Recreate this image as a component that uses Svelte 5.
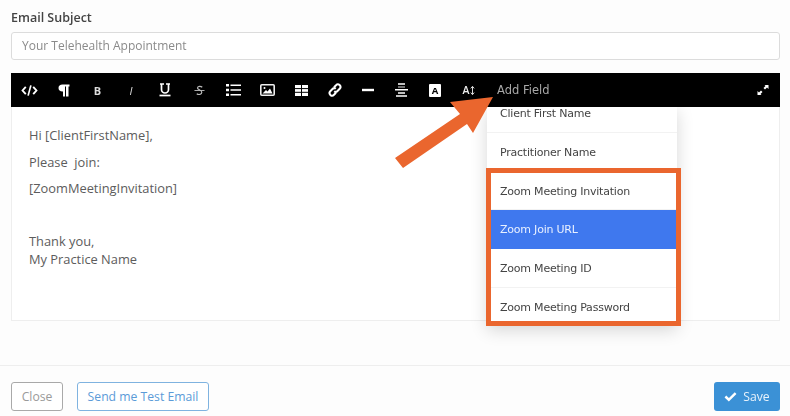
<script>
	const items = ['Zoom Meeting Invitation', 'Zoom Join URL', 'Zoom Meeting ID', 'Zoom Meeting Password'];
</script>

<main>
	<section class="form">
		<p class="label">Email Subject</p>
		<div class="input">Your Telehealth Appointment</div>

		<div class="editor">
			<div class="toolbar">
				<span class="tool" style="--w: 36px">
					<svg viewBox="0 0 18 14" width="17" height="13"><path d="M5 3 1.500 7 5 11M13 3l3.500 4L13 11" fill="none" stroke="#fff" stroke-width="2"/><path d="M10.500 1.500 7.500 12.500" stroke="#fff" stroke-width="1.800"/></svg>
				</span>
				<span class="tool" style="--w: 34px">
					<svg viewBox="0 0 12 13" width="12" height="13"><path d="M4.500 0.500H11.500V2.500H10.500V12.500H8V2.500H7V12.500H5V7.500H4.500C2 7.500 .5 6 .5 4S2 .5 4.500 .5Z" fill="#fff"/></svg>
				</span>
				<span class="tool glyph" style="--w: 33px">B</span>
				<span class="tool glyph ital" style="--w: 34px">I</span>
				<span class="tool" style="--w: 34px">
					<svg viewBox="0 0 12 14" width="12" height="14"><path d="M1 1h4M7 1h4M2.500 1v5.500a3.500 3.500 0 0 0 7 0V1" fill="none" stroke="#fff" stroke-width="1.700"/><path d="M0.500 12.500h11" stroke="#fff" stroke-width="1.700"/></svg>
				</span>
				<span class="tool" style="--w: 34px">
					<svg viewBox="0 0 12 12" width="11" height="11"><path d="M9 2.500C7.500 1 4 1 3.800 3.200 3.700 5.500 8.500 5 8.500 8 8.500 10.500 5 11 3 9.500" fill="none" stroke="#bbb" stroke-width="1.300"/><path d="M0.500 6h11" stroke="#bbb" stroke-width="1"/></svg>
				</span>
				<span class="tool" style="--w: 34px">
					<svg viewBox="0 0 15 12" width="15" height="12"><path d="M0 0h3v2.400H0zM0 4.800h3v2.400H0zM0 9.600h3V12H0z" fill="#fff"/><path d="M4.500 .5H15v1.600H4.500zM4.500 5.200H15v1.600H4.500zM4.500 9.900H15v1.600H4.500z" fill="#fff"/></svg>
				</span>
				<span class="tool" style="--w: 34px">
					<svg viewBox="0 0 15 12" width="15" height="12"><rect x=".8" y=".8" width="13.400" height="10.400" rx="1" fill="none" stroke="#eee" stroke-width="1.600"/><path d="M2.500 9.500 6 6l1.500 1.500L10 4.500l2.500 5z" fill="#fff"/><circle cx="4.500" cy="4" r="1" fill="#fff"/></svg>
				</span>
				<span class="tool" style="--w: 34px">
					<svg viewBox="0 0 13 11" width="13" height="11"><path d="M0 0h13v11H0z" fill="#fff"/><path d="M0 3.600h13M0 7.300h13M6.500 0V11" stroke="#000" stroke-width="1"/></svg>
				</span>
				<span class="tool" style="--w: 33px">
					<svg viewBox="0 0 14 14" width="14" height="14"><path d="M6 4.200 8 2.200a2.400 2.400 0 0 1 3.700 3.500L9.500 8a2.400 2.400 0 0 1-3.300.2M8 9.800 6 11.800a2.400 2.400 0 0 1-3.700-3.500L4.500 6a2.400 2.400 0 0 1 3.300-.2" fill="none" stroke="#fff" stroke-width="2"/></svg>
				</span>
				<span class="tool" style="--w: 33px">
					<svg viewBox="0 0 12 4" width="12" height="4"><path d="M0 .8h12v2.400H0z" fill="#fff"/></svg>
				</span>
				<span class="tool" style="--w: 34px">
					<svg viewBox="0 0 13 14" width="13" height="14"><path d="M3 1h7M0 6.800h13M3 10h7M1 13h11" stroke="#fff" stroke-width="1.500"/><path d="M3 4h7" stroke="#bbb" stroke-width="1.200"/></svg>
				</span>
				<span class="tool" style="--w: 34px">
					<span class="badge">A</span>
				</span>
				<span class="tool" style="--w: 34px">
					<span class="size">A</span>
					<svg viewBox="0 0 6 12" width="5" height="11"><path d="M3 1.500v9M1 3.500 3 1l2 2.500M1 8.500 3 11l2-2.500" fill="none" stroke="#eee" stroke-width="1.100"/></svg>
				</span>
				<span class="add">Add Field</span>
				<span class="expand">
					<svg viewBox="0 0 12 12" width="12" height="12"><path d="M7.500 1H11.500V5L10 3.500 8 5.500 6.500 4 8.500 2Z" fill="#fff"/><path d="M4.500 11H.5V7L2 8.500 4 6.500 5.500 8 3.500 10Z" fill="#fff"/></svg>
				</span>
			</div>

			<div class="body">
				<p>Hi [ClientFirstName],</p>
				<p>Please&nbsp; join:</p>
				<p>[ZoomMeetingInvitation]</p>
				<p class="sign">Thank you,<br />My Practice Name</p>

				<div class="menu">
					<div class="row first">Client First Name</div>
					<div class="row">Practitioner Name</div>
					{#each items as item, i}
						<div class="row" class:active={i == 1}>{item}</div>
					{/each}
					<div class="callout"></div>
				</div>
			</div>
		</div>
	</section>

	<footer>
		<button class="close">Close</button>
		<button class="test">Send me Test Email</button>
		<button class="save">
			<svg viewBox="0 0 14 11" width="13" height="11"><path d="M1.500 5.500 5.200 9 12.500 1.800" fill="none" stroke="#fff" stroke-width="2.600"/></svg>
			Save
		</button>
	</footer>

	<svg class="arrow" viewBox="390 92 110 80" width="110" height="80">
		<path d="M493 97 473 133 467 124 403 168 395 158 460 114 450 102Z" fill="#ea662e"/>
	</svg>
</main>

<style>
	:global(body) {
		background: #fdfdfd;
	}
	main {
		position: relative;
		width: 790px;
		height: 416px;
		overflow: hidden;
		font-family: "Open Sans", sans-serif;
		filter: blur(0.35px);
	}
	.form {
		padding: 10px 10px 0 11px;
		height: 355px;
	}
	.label {
		margin: 0 0 6px;
		font-size: 12.500px;
		line-height: 16px;
		font-weight: 600;
		color: #444;
	}
	.input {
		height: 26px;
		line-height: 26px;
		padding-left: 10px;
		background: #fff;
		border: 1px solid #dcdcdc;
		border-radius: 3px;
		font-size: 12px;
		color: #8a8a8a;
	}
	.editor {
		margin-top: 13px;
	}
	.toolbar {
		height: 34px;
		background: #000;
		display: flex;
		align-items: center;
		color: #fff;
	}
	.tool {
		width: var(--w);
		display: flex;
		justify-content: center;
		align-items: center;
		gap: 1px;
		flex: none;
	}
	.glyph {
		font-size: 11px;
		font-weight: 700;
		color: #ddd;
	}
	.ital {
		font-style: italic;
		font-weight: 400;
	}
	.badge {
		width: 12px;
		height: 13px;
		background: #fff;
		color: #000;
		border-radius: 1px;
		font-size: 9.500px;
		font-weight: 700;
		line-height: 13px;
		text-align: center;
	}
	.size {
		font-size: 10.500px;
		font-weight: 600;
		color: #eee;
	}
	.add {
		margin-left: 11px;
		font-family: "DejaVu Sans", sans-serif;
		font-size: 11.500px;
		color: #a8a8a8;
	}
	.expand {
		margin-left: auto;
		margin-right: 11px;
		display: flex;
	}
	.body {
		position: relative;
		height: 214px;
		box-sizing: border-box;
		background: #fff;
		border: 1px solid #eee;
		border-top: 0;
		padding: 19px 17px 0;
		font-size: 12.850px;
		line-height: 18px;
		color: #5c5c5c;
	}
	.body p {
		margin: 0 0 8.500px;
	}
	.body .sign {
		margin-top: 35px;
	}
	.menu {
		position: absolute;
		left: 475px;
		top: 0;
		width: 190px;
		height: 219px;
		background: #fff;
		box-shadow: 0 4px 16px rgba(0, 0, 0, 0.16);
		font-family: "DejaVu Sans", sans-serif;
		font-size: 11px;
		letter-spacing: -0.22px;
		color: #444;
	}
	.row {
		height: 38.700px;
		line-height: 40px;
		padding-left: 13px;
		box-sizing: border-box;
		border-bottom: 1px solid #f2f2f2;
	}
	.row.first {
		height: 26px;
		line-height: 13px;
	}
	.row.active {
		background: #3f78ee;
		color: #e8f0ff;
		border-bottom: 0;
	}
	.callout {
		position: absolute;
		left: -1px;
		top: 61px;
		width: 195px;
		height: 158px;
		box-sizing: border-box;
		border: 5px solid #ea662e;
	}
	footer {
		height: 50px;
		border-top: 1px solid #eeeeee;
		display: flex;
		align-items: flex-start;
		padding: 16px 10px 0 11px;
		gap: 14px;
	}
	button {
		height: 29px;
		border-radius: 3px;
		background: #fff;
		font-family: "Open Sans", sans-serif;
		font-size: 12.200px;
		line-height: 26px;
		padding: 0;
	}
	.close {
		width: 52px;
		border: 1px solid #a9a9a9;
		color: #9a9a9a;
	}
	.test {
		width: 132px;
		border: 1px solid #7fb3e0;
		color: #5b9bd8;
	}
	.save {
		margin-left: auto;
		width: 66px;
		border: 0;
		background: #3b91d6;
		color: #e8f2fb;
		display: flex;
		align-items: center;
		justify-content: center;
		gap: 6px;
	}
	.arrow {
		position: absolute;
		left: 390px;
		top: 92px;
	}
</style>
